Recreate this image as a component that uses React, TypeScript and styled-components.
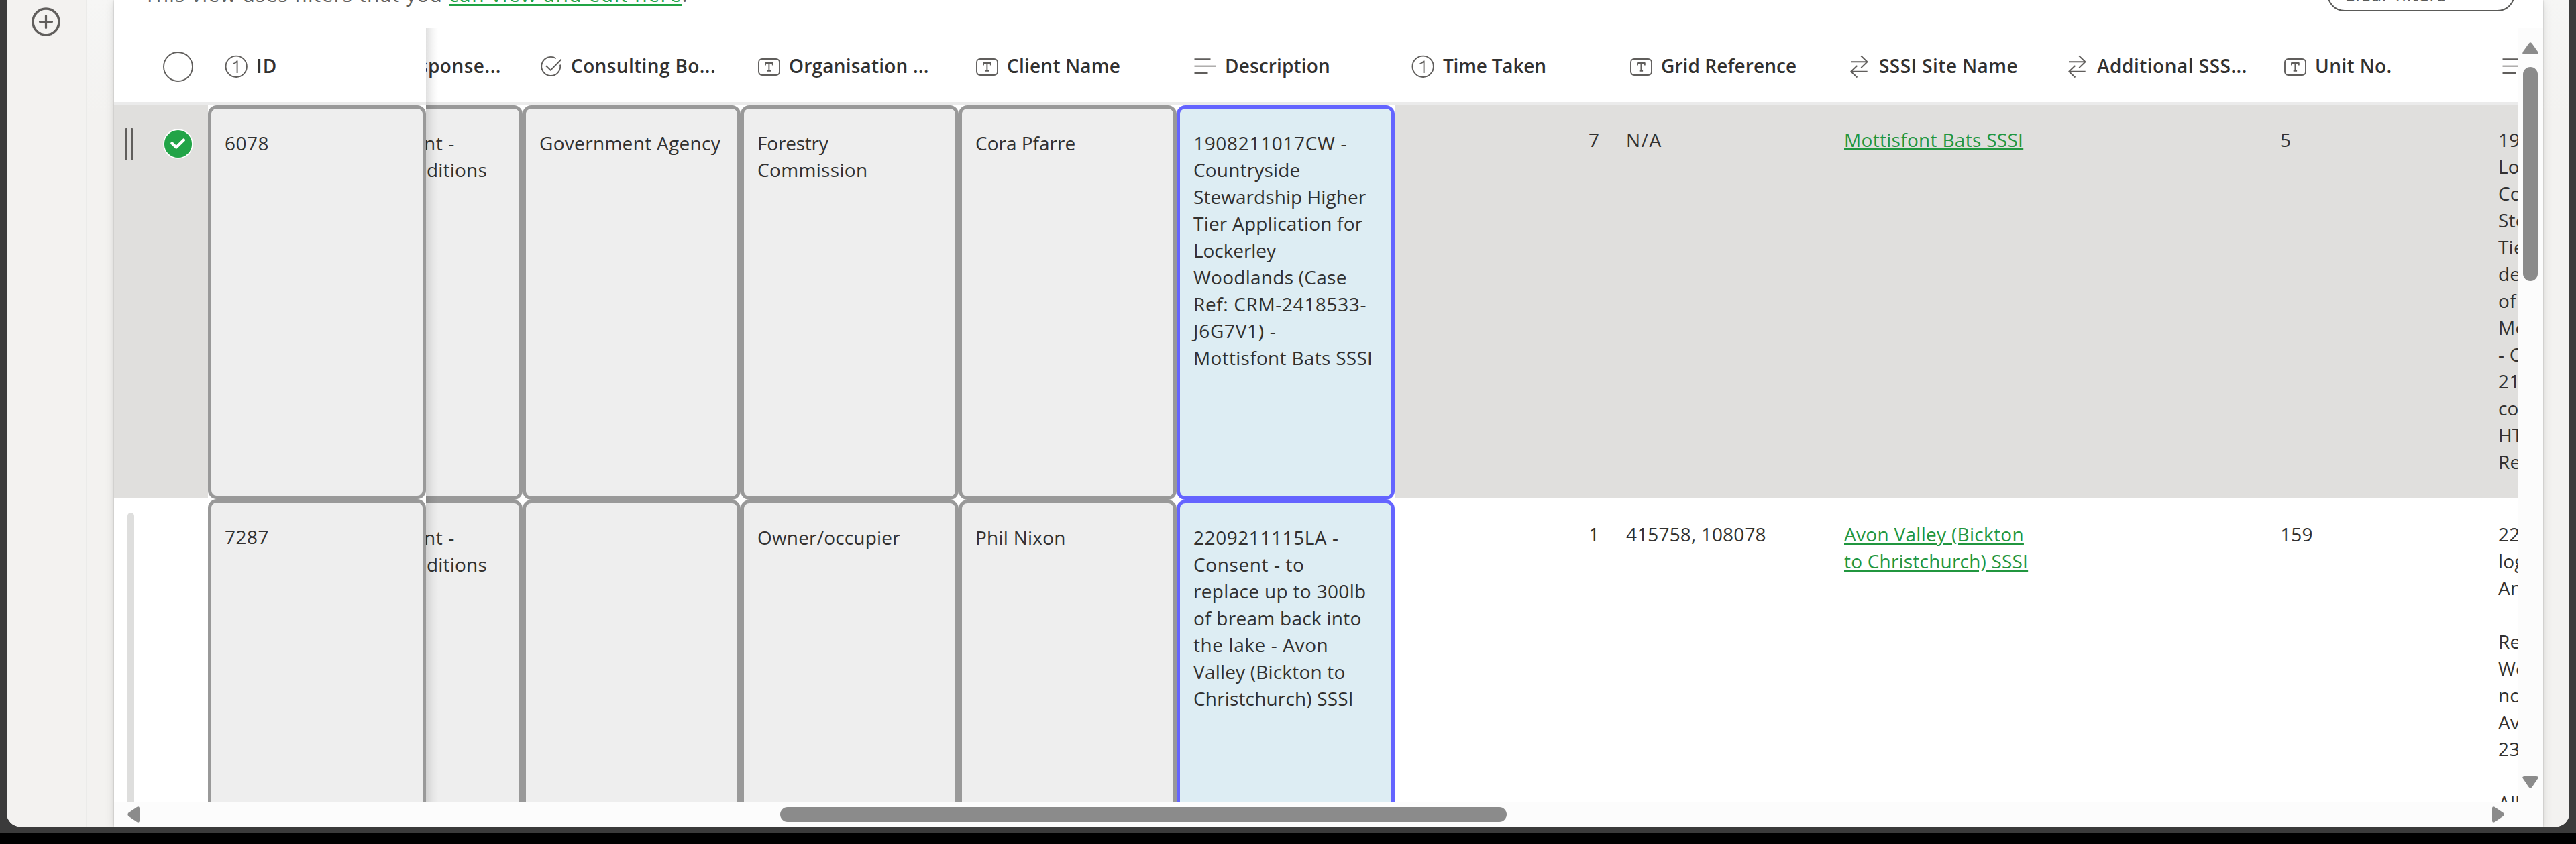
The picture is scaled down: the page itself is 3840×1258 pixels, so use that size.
import React from "react";
import styled, { createGlobalStyle, css } from "styled-components";

const Global = createGlobalStyle`
  * { box-sizing: border-box; }
  body { margin: 0; background: #000; }
`;

const ink = "#323130";
const iconInk = "#605e5c";
const COL = 325;

const Screen = styled.div`
  width: 3840px;
  height: 1258px;
  overflow: hidden;
  background: #000;
  color: ${ink};
  font-family: "Open Sans", "Noto Sans", sans-serif;
  font-size: 28px;
  line-height: 40px;
`;
const Frame = styled.div`
  height: 1242px;
  padding: 0 10px 10px;
  background: #3b3b3b;
`;
const Window = styled.div`
  display: flex;
  height: 1232px;
  overflow: hidden;
  border-radius: 0 0 20px 20px;
  background: #f3f2f0;
`;
const Rail = styled.nav`
  flex: none;
  width: 120px;
  padding: 10px 0 0 36px;
  border-right: 2px solid #ebebe9;
  background: #f3f2f0;
  svg { display: block; }
`;
const Gutter = styled.div<{ $w: number }>`
  flex: none;
  width: ${(p) => p.$w}px;
  background: linear-gradient(#f6f6f5, #f3f2f0 170px);
`;
const Panel = styled.main`
  position: relative;
  display: flex;
  flex-direction: column;
  width: 3621px;
  flex: none;
  background: #fff;
  box-shadow: 0 0 3px rgba(0, 0, 0, 0.22), 0 3px 14px rgba(0, 0, 0, 0.12);
`;

const FilterBar = styled.div`
  flex: none;
  display: flex;
  justify-content: space-between;
  align-items: flex-end;
  height: 42px;
  padding: 0 42px 24px 45px;
  border-bottom: 1px solid #f3f3f3;
`;
const FilterText = styled.p`
  flex: none;
  margin: 0 0 5px;
  font-size: 30px;
  letter-spacing: 1.15px;
  white-space: nowrap;
  color: ${iconInk};
`;
const FilterLink = styled.a`
  color: #20a445;
  letter-spacing: 1.5px;
  text-decoration: underline;
  text-decoration-thickness: 3px;
  text-underline-offset: 3px;
  text-decoration-skip-ink: none;
`;
const ClearButton = styled.button`
  flex: none;
  width: 280px;
  height: 64px;
  margin: 0;
  padding: 16px 0 4px 22px;
  border: 2px solid #5a5a58;
  border-radius: 26px;
  background: #fff;
  color: #5a5a58;
  font: 500 28px/40px "Open Sans", sans-serif;
  letter-spacing: 0.4px;
  text-align: left;
`;

const Body = styled.div`
  flex: 1;
  min-height: 0;
  display: flex;
`;
const TableSide = styled.div`
  width: 3583px;
  display: flex;
  flex-direction: column;
`;
const Table = styled.div`
  display: flex;
  height: 1153px;
  overflow: hidden;
`;
const Pinned = styled.div`
  flex: none;
  width: 465px;
`;
const Scroller = styled.div`
  position: relative;
  flex: 1;
  min-width: 0;
  overflow: hidden;
`;
const EdgeShadow = styled.div`
  position: absolute;
  inset: 0 auto 0 0;
  width: 18px;
  background: linear-gradient(to right, rgba(0, 0, 0, 0.12), rgba(0, 0, 0, 0.04) 55%, rgba(0, 0, 0, 0));
`;
const Track = styled.div`
  width: ${COL * 11}px;
  margin-left: -181px;
`;
const Row = styled.div<{ $h: number }>`
  display: flex;
  height: ${(p) => p.$h}px;
`;
const HeadRow = styled.div`
  display: flex;
  align-items: center;
  height: 115px;
  border-bottom: 5px solid #ebebeb;
`;
const HeadCell = styled.div`
  flex: none;
  display: flex;
  align-items: center;
  gap: 12px;
  width: ${COL}px;
  padding: 0 32px 0 24px;
  svg { flex: none; display: block; }
`;
const Title = styled.span<{ $s: number; $end?: boolean }>`
  flex: 1;
  display: flex;
  justify-content: ${(p) => (p.$end ? "flex-end" : "flex-start")};
  padding-top: 1px;
  font-weight: 600;
  letter-spacing: ${(p) => p.$s}px;
  white-space: pre;
`;
const SelectHead = styled.div`
  flex: none;
  width: 140px;
  padding: 5px 0 0 73px;
  svg { display: block; }
`;
const SelectCell = styled.div<{ $on?: boolean }>`
  flex: none;
  display: flex;
  align-items: flex-start;
  gap: 44px;
  width: 140px;
  padding: ${(p) => (p.$on ? "34px 0 0 16px" : "20px 0 0 20px")};
  background: ${(p) => (p.$on ? "#e0dfdd" : "#fff")};
  border-bottom: 1px solid #fff;
`;
const Grip = styled.span`
  width: 13px;
  height: 48px;
  border: solid ${iconInk};
  border-width: 0 4.5px;
  border-radius: 2px;
`;
const Skeleton = styled.span`
  width: 10px;
  height: 100%;
  border-radius: 5px;
  background: #dededd;
`;

const boxed = {
  grey: css`background: #eee; border-color: #999;`,
  blue: css`background: #ddedf3; border-color: #6464ff;`,
};
const BoxCell = styled.div<{ $tone: "grey" | "blue"; $end?: boolean }>`
  flex: none;
  width: ${COL}px;
  padding: 31px 0 0 20px;
  border: 5px solid;
  border-radius: 13px;
  ${(p) => boxed[p.$tone]}
  ${(p) => p.$end && css`padding: 31px 0 0 173px;`}
`;
const PlainCell = styled.div<{ $on?: boolean; $right?: boolean }>`
  flex: none;
  width: ${COL}px;
  padding: 31px 20px 0;
  border-bottom: 2px solid #fff;
  background: ${(p) => (p.$on ? "#e0dfdd" : "#fff")};
  text-align: ${(p) => (p.$right ? "right" : "left")};
`;
const Line = styled.div<{ $s: number; $inset?: number }>`
  height: 40px;
  padding-left: ${(p) => p.$inset ?? 0}px;
  letter-spacing: ${(p) => p.$s}px;
  white-space: pre;
`;
const SiteLink = styled.a`
  color: #21963f;
  text-decoration: underline;
  text-decoration-thickness: 3px;
  text-underline-offset: 2px;
`;

const VBar = styled.div`
  flex: none;
  width: 38px;
  padding: 20px 7px 57px;
  display: flex;
  flex-direction: column;
  justify-content: space-between;
  background: #fcfcfc;
  svg { display: block; }
`;
const VThumb = styled.div`
  width: 22px;
  height: 319px;
  margin: 0 0 auto 1px;
  border-radius: 11px;
  background: #8b8b8b;
`;
const HBar = styled.div`
  flex: 1;
  display: flex;
  align-items: flex-start;
  padding: 7px 20px 0 20px;
  background: #fcfcfc;
  svg { display: block; }
`;
const HThumb = styled.div`
  width: 1083px;
  height: 22px;
  margin: 1px auto 0 955px;
  border-radius: 11px;
  background: #8b8b8b;
`;

type Kind = "number" | "text" | "choice" | "lines" | "lookup";
const shapes: Record<Kind, React.ReactNode> = {
  number: (
    <>
      <circle cx="18.2" cy="22.3" r="15.7" />
      <path d="M13.6 18.2c2.8-.8 4.8-2.2 6-4.2V32" />
    </>
  ),
  text: (
    <>
      <rect x="3" y="11" width="31" height="24" rx="5" />
      <path d="M13 20.500v-3.500h10.800v3.500M18.400 17v11.500M15.700 28.700h5.400" />
    </>
  ),
  choice: (
    <>
      <path d="M25.800 10.200A14 14 0 1 0 32 19.500" />
      <path d="M11 21.300l6.700 6.500L33.800 11.500" />
    </>
  ),
  lines: <path d="M2.500 11.300h24M2.500 21.600h32M2.500 32h20" />,
  lookup: <path d="M6 15.300h24.300M21.300 6.500l9.200 8.800-9.200 8.800M30.700 29.700H6.400M15.500 21l-9.300 8.700 9.300 8.800" />,
};
const Icon = ({ kind }: { kind: Kind }) => (
  <svg width="36" height="40" viewBox="0 0 36 40" fill="none" stroke={iconInk} strokeWidth="1.9" strokeLinejoin="round">
    {shapes[kind]}
  </svg>
);

type Text = [string, number, number?];
const Lines = ({ of }: { of: Text[] }) => (
  <>
    {of.map(([t, s, inset], i) => (
      <Line key={i} $s={s} $inset={inset}>{t}</Line>
    ))}
  </>
);

const heads: { kind: Kind; text: string; s: number; end?: boolean }[] = [
  { kind: "text", text: "sponse...", s: 0.5, end: true },
  { kind: "choice", text: "Consulting Bo...", s: 0.38 },
  { kind: "text", text: "Organisation ...", s: 0.2 },
  { kind: "text", text: "Client Name", s: 0.22 },
  { kind: "lines", text: "Description", s: 0.15 },
  { kind: "number", text: "Time Taken", s: -0.2 },
  { kind: "text", text: "Grid Reference", s: 0.07 },
  { kind: "lookup", text: "SSSI Site Name", s: 0.45 },
  { kind: "lookup", text: "Additional SSS...", s: 0.5 },
  { kind: "text", text: "Unit No.", s: 0.4 },
  { kind: "lines", text: "", s: 0 },
];

interface Case {
  on: boolean;
  id: string;
  response: Text[];
  body: Text[];
  organisation: Text[];
  client: Text[];
  description: Text[];
  time: string;
  grid: Text[];
  site: Text[];
  unit: string;
  notes: Text[];
}
const cases: Case[] = [
  {
    on: true,
    id: "6078",
    response: [["nt -", 0.6], ["ditions", 0.2, 4]],
    body: [["Government Agency", 0.31]],
    organisation: [["Forestry", -0.2], ["Commission", 0.33]],
    client: [["Cora Pfarre", 0]],
    description: [
      ["1908211017CW -", 0.66],
      ["Countryside", 0.18],
      ["Stewardship Higher", 0.06],
      ["Tier Application for", 0.22],
      ["Lockerley", -0.08],
      ["Woodlands (Case", 0.26],
      ["Ref: CRM-2418533-", 0.64],
      ["J6G7V1) -", 0.7],
      ["Mottisfont Bats SSSI", 0.3],
    ],
    time: "7",
    grid: [["N/A", 1.6]],
    site: [["Mottisfont Bats SSSI", 0.3]],
    unit: "5",
    notes: ["19", "Lo", "Co", "Ste", "Tie", "de", "of", "Mo", "- C", "21", "co", "HT", "Re"].map((t) => [t, 0.2]),
  },
  {
    on: false,
    id: "7287",
    response: [["nt -", 0.6], ["ditions", 0.2, 4]],
    body: [],
    organisation: [["Owner/occupier", 0.18]],
    client: [["Phil Nixon", 0.25]],
    description: [
      ["2209211115LA -", 0.56],
      ["Consent - to", 0.6],
      ["replace up to 300lb", 0.33],
      ["of bream back into", 0.27],
      ["the lake - Avon", 0.59],
      ["Valley (Bickton to", 0.19],
      ["Christchurch) SSSI", 0.16],
    ],
    time: "1",
    grid: [["415758, 108078", 0.15]],
    site: [["Avon Valley (Bickton", 0.3], ["to Christchurch) SSSI", 0.2]],
    unit: "159",
    notes: ["22", "log", "An", "", "Re", "We", "no", "Av", "23", "", "All"].map((t) => [t, 0.2]),
  },
];

export default function App() {
  return (
    <Screen>
      <Global />
      <Frame>
        <Window>
          <Rail>
            <svg width="46" height="46" viewBox="0 0 46 46" fill="none" stroke={iconInk} strokeLinecap="round">
              <circle cx="22.500" cy="22.500" r="19.500" strokeWidth="3.600" />
              <path d="M13.500 22.500h18M22.500 13.500v18" strokeWidth="3.200" />
            </svg>
          </Rail>
          <Gutter $w={40} />
          <Panel>
            <FilterBar>
              <FilterText>
                This view uses filters that you <FilterLink>can view and edit here</FilterLink>.
              </FilterText>
              <ClearButton>Clear filters</ClearButton>
            </FilterBar>
            <Body>
              <TableSide>
                <Table>
                  <Pinned>
                    <HeadRow>
                      <SelectHead>
                        <svg width="46" height="46" viewBox="0 0 46 46" fill="none">
                          <circle cx="22.500" cy="22.500" r="21.500" stroke={iconInk} strokeWidth="1.900" />
                        </svg>
                      </SelectHead>
                      <HeadCell>
                        <Icon kind="number" />
                        <Title $s={1.2}>ID</Title>
                      </HeadCell>
                    </HeadRow>
                    {cases.map((c) => (
                      <Row key={c.id} $h={587}>
                        <SelectCell $on={c.on}>
                          {c.on ? (
                            <>
                              <Grip />
                              <svg width="46" height="46" viewBox="0 0 46 46" fill="none">
                                <circle cx="22.500" cy="23.500" r="22.300" fill="#fff" />
                                <circle cx="22.500" cy="23.500" r="20.600" fill="#22a447" />
                                <path d="M13.500 22.500l6.300 6 11-10.800" stroke="#fff" strokeWidth="4.400" strokeLinecap="round" strokeLinejoin="round" />
                              </svg>
                            </>
                          ) : (
                            <Skeleton />
                          )}
                        </SelectCell>
                        <BoxCell $tone="grey">
                          <Line $s={0.52}>{c.id}</Line>
                        </BoxCell>
                      </Row>
                    ))}
                  </Pinned>
                  <Scroller>
                    <Track>
                      <HeadRow>
                        {heads.map((h, i) => (
                          <HeadCell key={i}>
                            <Icon kind={h.kind} />
                            <Title $s={h.s} $end={h.end}>{h.text}</Title>
                          </HeadCell>
                        ))}
                      </HeadRow>
                      {cases.map((c) => (
                        <Row key={c.id} $h={588}>
                          <BoxCell $tone="grey" $end><Lines of={c.response} /></BoxCell>
                          <BoxCell $tone="grey"><Lines of={c.body} /></BoxCell>
                          <BoxCell $tone="grey"><Lines of={c.organisation} /></BoxCell>
                          <BoxCell $tone="grey"><Lines of={c.client} /></BoxCell>
                          <BoxCell $tone="blue"><Lines of={c.description} /></BoxCell>
                          <PlainCell $on={c.on} $right>{c.time}</PlainCell>
                          <PlainCell $on={c.on}><Lines of={c.grid} /></PlainCell>
                          <PlainCell $on={c.on}>
                            {c.site.map(([t, s]) => (
                              <Line key={t} $s={s}><SiteLink>{t}</SiteLink></Line>
                            ))}
                          </PlainCell>
                          <PlainCell $on={c.on} />
                          <PlainCell $on={c.on}><Line $s={0.3}>{c.unit}</Line></PlainCell>
                          <PlainCell $on={c.on}><Lines of={c.notes} /></PlainCell>
                        </Row>
                      ))}
                    </Track>
                    <EdgeShadow />
                  </Scroller>
                </Table>
                <HBar>
                  <svg width="18" height="24" viewBox="0 0 18 24" fill="#8b8b8b">
                    <path d="M18 3v18q0 4-4 2L1.500 14.500Q-.8 12 1.500 9.500L14 1q4-2 4 2z" />
                  </svg>
                  <HThumb />
                  <svg width="18" height="24" viewBox="0 0 18 24" fill="#8b8b8b">
                    <path d="M0 3v18q0 4 4 2l12.500-8.500q2.300-2.500 0-5L4 1Q0-1 0 3z" />
                  </svg>
                </HBar>
              </TableSide>
              <VBar>
                <svg width="24" height="38" viewBox="0 0 24 38" fill="#8b8b8b">
                  <path d="M3 19h18q4 0 2-4L14.500 3Q12-.5 9.500 3L1 15q-2 4 2 4z" />
                </svg>
                <VThumb />
                <svg width="24" height="18" viewBox="0 0 24 18" fill="#8b8b8b">
                  <path d="M3 0h18q4 0 2 3.500L14.500 16Q12 19 9.500 16L1 3.500Q-1 0 3 0z" />
                </svg>
              </VBar>
            </Body>
          </Panel>
          <Gutter $w={39} />
        </Window>
      </Frame>
    </Screen>
  );
}
